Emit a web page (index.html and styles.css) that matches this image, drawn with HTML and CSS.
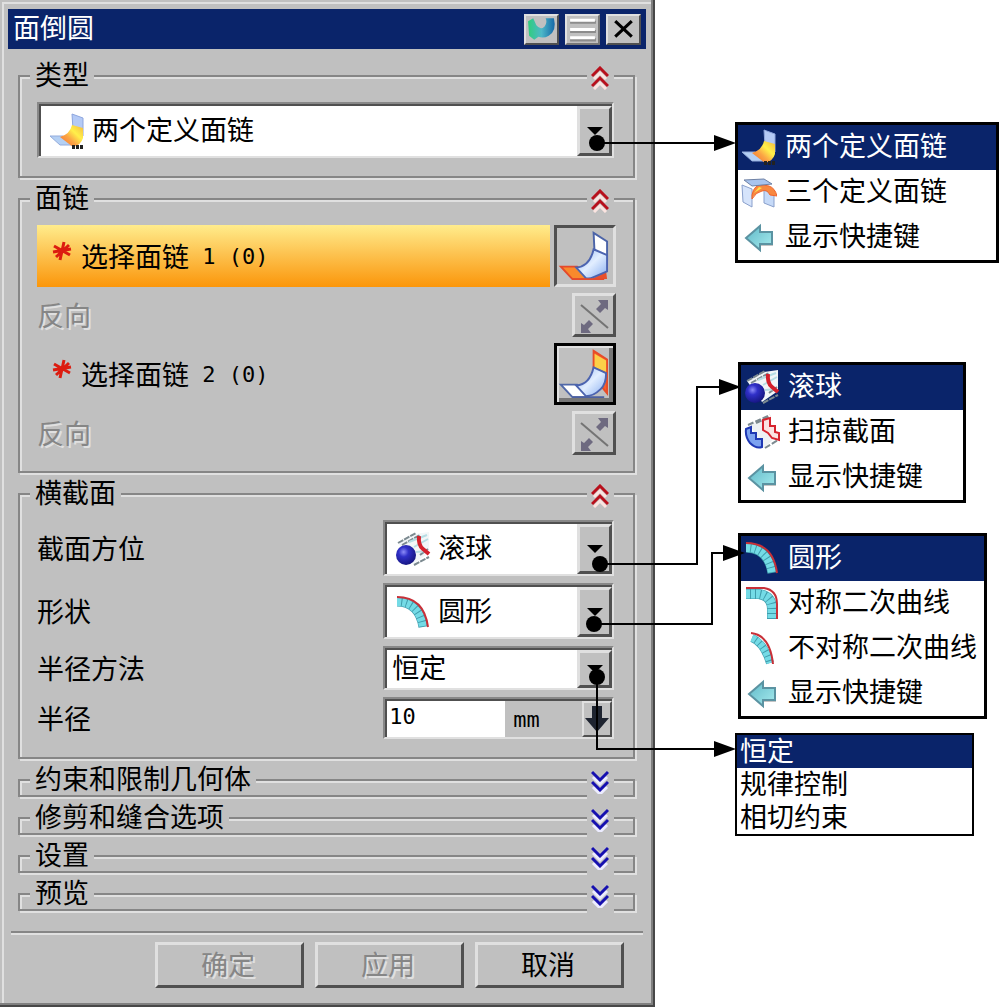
FILE: index.html
```html
<!DOCTYPE html>
<html lang="zh-CN">
<head>
  <meta charset="UTF-8">
  <meta name="viewport" content="width=device-width, initial-scale=1.0">
  <title>面倒圆</title>
  <link rel="stylesheet" href="styles.css">
</head>
<body>
  <!-- Shared icons -->
  <svg class="sprite" aria-hidden="true">
    <defs>
      <linearGradient id="blueFace" x1="0" y1="0" x2="1" y2="1">
        <stop offset="0" stop-color="#8fb4f4"/>
        <stop offset="0.5" stop-color="#e2eeff"/>
        <stop offset="1" stop-color="#88aef0"/>
      </linearGradient>
      <linearGradient id="warmFace" x1="0" y1="1" x2="1" y2="0">
        <stop offset="0" stop-color="#f4682a"/>
        <stop offset="0.4" stop-color="#fba545"/>
        <stop offset="0.65" stop-color="#fff04a"/>
        <stop offset="1" stop-color="#f4b840"/>
      </linearGradient>
      <linearGradient id="cyanArrow" x1="0" y1="0" x2="1" y2="1">
        <stop offset="0" stop-color="#5fb8c8"/>
        <stop offset="1" stop-color="#a8ecee"/>
      </linearGradient>
      <linearGradient id="swirl" x1="0" y1="0" x2="1" y2="0">
        <stop offset="0" stop-color="#2fce7c"/>
        <stop offset="0.5" stop-color="#4db8c8"/>
        <stop offset="1" stop-color="#1668a8"/>
      </linearGradient>
      <radialGradient id="ballFill" cx="0.38" cy="0.35" r="0.7">
        <stop offset="0" stop-color="#8c8cf8"/>
        <stop offset="0.35" stop-color="#3030c8"/>
        <stop offset="1" stop-color="#14147c"/>
      </radialGradient>
    </defs>
    <symbol id="two-faces" viewBox="0 0 36 36">
      <path d="M23 1l11 4v18l-10-6z" fill="#b4caf6" stroke="#8ea6de"/>
      <path d="M1 23h13l11 9H11z" fill="#b4d0f4" stroke="#94acdc"/>
      <path d="M23 12l11 3v10q-2 7-10 9l-13-10q10-3 12-12z" fill="url(#warmFace)"/>
      <path d="M23 34h12" stroke="#222" stroke-width="4" stroke-dasharray="3 1"/>
    </symbol>
    <symbol id="three-faces" viewBox="0 0 36 36">
      <path d="M1 11l10 4v18L2 28z" fill="#d6e4fb" stroke="#8aa0cc"/>
      <path d="M23 16l10 4v13l-10-4z" fill="#c6daf8" stroke="#8aa0cc"/>
      <path d="M11 21q2-11 11-10l6 1q6 2 8 10l-7-1q-3-6-8-4-6 1-10 8z" fill="#f88840" stroke="#f0642c"/>
      <path d="M3 6l20-1 8 5-20 2z" fill="#a8c4ee" stroke="#6e80a4"/>
      <path d="M13 19l5-6 3 1z" fill="#ffe14d"/>
    </symbol>
    <symbol id="shortcut" viewBox="0 0 36 36">
      <path d="M7 21L20 9v6h12v12H20v6z" fill="#c4c4c4"/>
      <path d="M5 19L19 7v6h12v12H19v6z" fill="url(#cyanArrow)" stroke="#5b93a2" stroke-width="2"/>
    </symbol>
    <symbol id="ball" viewBox="0 0 36 36">
      <path d="M3 12L20 3l14-2v21L18 33z" fill="#f2f6f8"/>
      <path d="M3 12L21 2M7 14L25 4M19 34l15-8M25 24l8-6" stroke="#7c8a90" stroke-width="2" stroke-dasharray="6 1"/>
      <path d="M14 11l18-7M19 16l14-8M21 21l12-1" stroke="#b6dde4" stroke-width="2"/>
      <path d="M24 5q-1 9 4 13l6 5" fill="none" stroke="#d4202c" stroke-width="4"/>
      <circle cx="11" cy="24" r="10" fill="url(#ballFill)"/>
    </symbol>
    <symbol id="swept" viewBox="0 0 36 36">
      <path d="M6 11L23 2l11 19-14 13z" fill="#eef2f4"/>
      <path d="M4 11L26 1M12 9l14-6M21 34l13-8" stroke="#7c8a90" stroke-width="2" stroke-dasharray="6 2"/>
      <path d="M19 6l7-2v8h5v6l4 1v7l-7-2-4-5-5-3z" fill="#fbe4e2" stroke="#d6242e" stroke-width="2"/>
      <path d="M2 15l5-2v6h5v6h6v8q-6 2-12-4-5-6-4-14z" fill="#7ca2f0" stroke="#1f38b4" stroke-width="2"/>
    </symbol>
    <symbol id="arc" viewBox="0 0 36 36">
      <path d="M2 8Q24 8 28 33" fill="none" stroke="#3f9cac" stroke-width="9"/>
      <path d="M2 8Q24 8 28 33" fill="none" stroke="#74dbe6" stroke-width="8" stroke-dasharray="4 1"/>
      <path d="M2 3Q29 3 33 33" fill="none" stroke="#c83038" stroke-width="2"/>
    </symbol>
    <symbol id="conic" viewBox="0 0 36 36">
      <path d="M2 9H15Q28 11 28 24V34" fill="none" stroke="#3f9cac" stroke-width="10"/>
      <path d="M2 9H15Q28 11 28 24V34" fill="none" stroke="#74dbe6" stroke-width="9" stroke-dasharray="4 1"/>
      <path d="M2 3H20Q33 5 33 19V34" fill="none" stroke="#c83038" stroke-width="2"/>
    </symbol>
    <symbol id="skew-conic" viewBox="0 0 36 36">
      <path d="M8 8Q20 13 26 33" fill="none" stroke="#3f9cac" stroke-width="8"/>
      <path d="M8 8Q20 13 26 33" fill="none" stroke="#74dbe6" stroke-width="7" stroke-dasharray="4 1"/>
      <path d="M7 3Q26 5 29 34" fill="none" stroke="#c83038" stroke-width="2"/>
    </symbol>
    <symbol id="fold-open" viewBox="0 0 18 24">
      <path d="M3 13l6-6 6 6M3 23l6-6 6 6" fill="none" stroke="#fbe4e0" stroke-width="3"/>
      <path d="M1 10l8-8 8 8M1 20l8-8 8 8" fill="none" stroke="#b8101c" stroke-width="3"/>
    </symbol>
    <symbol id="fold-closed" viewBox="0 0 18 24">
      <path d="M2 7l7 7 7-7M2 17l7 7 7-7" fill="none" stroke="#ececff" stroke-width="3"/>
      <path d="M1 2l8 8 8-8M1 12l8 8 8-8" fill="none" stroke="#1610b0" stroke-width="3"/>
    </symbol>
    <symbol id="star" viewBox="0 0 20 20">
      <path d="M12 1L8 19M2 5l16 9M4 16L17 4M1 11l18-3" stroke="#dc1c10" stroke-width="3"/>
    </symbol>
    <symbol id="flip" viewBox="0 0 36 36">
      <path d="M6 8l27 23" stroke="#747474" stroke-width="2"/>
      <path d="M33 3v10l-3-2-5 5-4-4 5-5-3-4zM6 36V26l3 2 5-5 4 4-5 5 3 4z" fill="#6e6a80"/>
    </symbol>
  </svg>

  <main class="page">
    <form class="dialog" aria-label="面倒圆">
      <header class="titlebar">
        <h1>面倒圆</h1>
        <button type="button" class="title-btn" aria-label="重置">
          <svg viewBox="0 0 30 26"><path d="M2 5l5-3 3 7q4 5 8 1 3-4 1-8l8 0q3 12-5 17-5 3-10 1l-4 3-5-4z" fill="url(#swirl)"/></svg>
        </button>
        <button type="button" class="title-btn title-btn-rolled" aria-label="折叠">
          <svg viewBox="0 0 30 26"><path d="M3 6h25M3 15h25M3 23h25" stroke="#8c8c8c" stroke-width="3"/><path d="M3 4h24M3 13h24M3 21h24" stroke="#fff" stroke-width="3"/></svg>
        </button>
        <button type="button" class="title-btn" aria-label="关闭">
          <svg viewBox="0 0 30 26"><path d="M7 5l16 15M23 5L7 20" stroke="#000" stroke-width="3"/></svg>
        </button>
      </header>

      <section class="group">
        <div class="group-head">
          <h2>类型</h2>
          <button type="button" class="fold" aria-label="折叠类型"><svg><use href="#fold-open"/></svg></button>
        </div>
        <div class="form">
          <div class="combo combo-tall">
            <svg class="icon"><use href="#two-faces"/></svg>
            <select aria-label="类型">
              <option>两个定义面链</option>
              <option>三个定义面链</option>
              <option>显示快捷键</option>
            </select>
            <span class="drop"></span>
          </div>
        </div>
      </section>

      <section class="group">
        <div class="group-head">
          <h2>面链</h2>
          <button type="button" class="fold" aria-label="折叠面链"><svg><use href="#fold-open"/></svg></button>
        </div>
        <div class="picks">
          <div class="pick">
            <label class="pick-label active" for="chain1">
              <svg class="star"><use href="#star"/></svg>选择面链<span class="latin"> 1 (0)</span>
            </label>
            <button type="button" id="chain1" class="chain-btn pressed">
              <svg viewBox="0 0 54 54">
                <path d="M51 43L36 51h16" fill="#e8502c"/>
                <path d="M4 38h17l12 13H16z" fill="#f98a2c" stroke="#e44a2c" stroke-width="2"/>
                <path d="M24 38l9 10-5 1-8-9z" fill="#fbc878"/>
                <path d="M38 3l14 9v18l-13-7z" fill="#fff" stroke="#4c64a8" stroke-width="2"/>
                <path d="M38 20l14 6v17L38 49q-4 2-8 1L20 39q14-1 18-19z" fill="url(#blueFace)" stroke="#4c64b0" stroke-width="2"/>
                <path d="M16 51h33" stroke="#e44a2c" stroke-width="2"/>
              </svg>
            </button>
          </div>
          <div class="pick">
            <label class="off" for="flip1">反向</label>
            <button type="button" id="flip1" class="flip-btn" disabled><svg><use href="#flip"/></svg></button>
          </div>
          <div class="pick">
            <label class="pick-label" for="chain2">
              <svg class="star"><use href="#star"/></svg>选择面链<span class="latin"> 2 (0)</span>
            </label>
            <button type="button" id="chain2" class="chain-btn">
              <svg viewBox="0 0 54 54">
                <path d="M4 38h17l12 13H16z" fill="#fff" stroke="#5068a8" stroke-width="2"/>
                <path d="M38 3l14 9v35l-5-6-9-18z" fill="#f4602c" stroke="#e84c28" stroke-width="2"/>
                <path d="M39 6l12 7v12l-12-5z" fill="#fcd048"/>
                <path d="M38 20l13 6q0 12-6 17-7 7-15 7L20 39q14-1 18-19z" fill="url(#blueFace)" stroke="#4c64b0" stroke-width="2"/>
                <path d="M16 51h33" stroke="#4c60a0" stroke-width="2"/>
              </svg>
            </button>
          </div>
          <div class="pick">
            <label class="off" for="flip2">反向</label>
            <button type="button" id="flip2" class="flip-btn" disabled><svg><use href="#flip"/></svg></button>
          </div>
        </div>
      </section>

      <section class="group">
        <div class="group-head">
          <h2>横截面</h2>
          <button type="button" class="fold" aria-label="折叠横截面"><svg><use href="#fold-open"/></svg></button>
        </div>
        <div class="form">
          <div class="field">
            <label for="orient">截面方位</label>
            <div class="combo combo-tall">
              <svg class="icon"><use href="#ball"/></svg>
              <select id="orient">
                <option>滚球</option>
                <option>扫掠截面</option>
                <option>显示快捷键</option>
              </select>
              <span class="drop"></span>
            </div>
          </div>
          <div class="field">
            <label for="shape">形状</label>
            <div class="combo combo-tall">
              <svg class="icon"><use href="#arc"/></svg>
              <select id="shape">
                <option>圆形</option>
                <option>对称二次曲线</option>
                <option>不对称二次曲线</option>
                <option>显示快捷键</option>
              </select>
              <span class="drop"></span>
            </div>
          </div>
          <div class="field">
            <label for="method">半径方法</label>
            <div class="combo">
              <select id="method" class="plain">
                <option>恒定</option>
                <option>规律控制</option>
                <option>相切约束</option>
              </select>
              <span class="drop"></span>
            </div>
          </div>
          <div class="field">
            <label for="radius">半径</label>
            <div class="combo combo-number">
              <input type="text" id="radius" value="10">
              <span class="unit">mm</span>
              <button type="button" class="more" aria-label="半径选项">
                <svg viewBox="0 0 26 34"><path d="M8 3h10v12h7L13 29 1 15h7z" fill="#1e2430"/></svg>
              </button>
            </div>
          </div>
        </div>
      </section>

      <section class="group">
        <div class="group-head">
          <h2>约束和限制几何体</h2>
          <button type="button" class="fold" aria-label="展开约束和限制几何体"><svg><use href="#fold-closed"/></svg></button>
        </div>
      </section>
      <section class="group">
        <div class="group-head">
          <h2>修剪和缝合选项</h2>
          <button type="button" class="fold" aria-label="展开修剪和缝合选项"><svg><use href="#fold-closed"/></svg></button>
        </div>
      </section>
      <section class="group">
        <div class="group-head">
          <h2>设置</h2>
          <button type="button" class="fold" aria-label="展开设置"><svg><use href="#fold-closed"/></svg></button>
        </div>
      </section>
      <section class="group">
        <div class="group-head">
          <h2>预览</h2>
          <button type="button" class="fold" aria-label="展开预览"><svg><use href="#fold-closed"/></svg></button>
        </div>
      </section>

      <footer class="actions">
        <button type="submit" disabled>确定</button>
        <button type="button" disabled>应用</button>
        <button type="button">取消</button>
      </footer>
    </form>

    <aside class="callouts">
      <div class="menu menu-type" role="menu" aria-label="类型">
        <button type="button" role="menuitem" class="current"><svg class="icon"><use href="#two-faces"/></svg>两个定义面链</button>
        <button type="button" role="menuitem"><svg class="icon"><use href="#three-faces"/></svg>三个定义面链</button>
        <button type="button" role="menuitem"><svg class="icon"><use href="#shortcut"/></svg>显示快捷键</button>
      </div>
      <div class="menu menu-orient" role="menu" aria-label="截面方位">
        <button type="button" role="menuitem" class="current"><svg class="icon"><use href="#ball"/></svg>滚球</button>
        <button type="button" role="menuitem"><svg class="icon"><use href="#swept"/></svg>扫掠截面</button>
        <button type="button" role="menuitem"><svg class="icon"><use href="#shortcut"/></svg>显示快捷键</button>
      </div>
      <div class="menu menu-shape" role="menu" aria-label="形状">
        <button type="button" role="menuitem" class="current"><svg class="icon"><use href="#arc"/></svg>圆形</button>
        <button type="button" role="menuitem"><svg class="icon"><use href="#conic"/></svg>对称二次曲线</button>
        <button type="button" role="menuitem"><svg class="icon"><use href="#skew-conic"/></svg>不对称二次曲线</button>
        <button type="button" role="menuitem"><svg class="icon"><use href="#shortcut"/></svg>显示快捷键</button>
      </div>
      <div class="menu menu-method" role="menu" aria-label="半径方法">
        <button type="button" role="menuitem" class="current">恒定</button>
        <button type="button" role="menuitem">规律控制</button>
        <button type="button" role="menuitem">相切约束</button>
      </div>

      <!-- Leader lines from each drop-down to its menu -->
      <svg class="leaders" viewBox="580 0 170 860" aria-hidden="true">
        <g fill="none" stroke="#000" stroke-width="2">
          <path d="M597 143H716"/>
          <path d="M600 564H697V387H720"/>
          <path d="M594 624H712V553H726"/>
          <path d="M597 677V749H716"/>
        </g>
        <circle cx="597" cy="143" r="8"/>
        <circle cx="600" cy="564" r="8"/>
        <circle cx="594" cy="624" r="8"/>
        <circle cx="597" cy="677" r="8"/>
        <path d="M714 135l22 8-22 8zM719 379l22 8-22 8zM723 545l22 8-22 8zM714 741l22 8-22 8z"/>
      </svg>
    </aside>
  </main>
</body>
</html>
```

FILE: styles.css
```css
:root {
  --face: #c0c0c0;
  --light: #e0e0e0;
  --shade: #868686;
  --dark: #505050;
  --navy: #0a246a;
}
* {
  box-sizing: border-box;
}
body {
  margin: 0;
  background: #fff;
  color: #000;
  font-family: "Noto Sans CJK SC", sans-serif;
  font-size: 27px;
  line-height: 30px;
}
button, select, input {
  font: inherit;
  color: inherit;
  margin: 0;
  padding: 0;
  border: none;
  border-radius: 0;
}
h1, h2 {
  margin: 0;
  font-size: 27px;
  font-weight: 400;
}
svg {
  display: block;
  flex: none;
}
.sprite {
  position: absolute;
  width: 0;
  height: 0;
}
.page {
  display: flex;
  align-items: flex-start;
}

/* Dialog */
.dialog {
  flex: 1;
  min-width: 0;
  padding: 9px 9px 19px 8px;
  background: var(--face);
  box-shadow: inset -2px -2px #484848, inset -4px -4px #808080,
    inset 2px 2px var(--face), inset 4px 4px var(--light);
}
.titlebar {
  display: flex;
  align-items: center;
  gap: 6px;
  height: 40px;
  padding: 0 5px;
  background: var(--navy);
  color: #fff;
}
.titlebar h1 {
  flex: 1;
  padding-bottom: 4px;
}
.title-btn {
  width: 35px;
  height: 31px;
  background: var(--face);
  border: 2px solid;
  border-color: var(--light) var(--dark) var(--dark) var(--light);
}
.title-btn svg {
  width: 100%;
  height: 100%;
}
.title-btn-rolled {
  border-color: var(--light) #777 #777 var(--light);
}

/* Etched group boxes */
.group {
  margin: 20px 11px 0 10px;
  border: 2px solid var(--shade);
  box-shadow: 2px 2px var(--light), inset 2px 2px var(--light);
}
.titlebar + .group {
  margin-top: 26px;
}
.group-head {
  display: flex;
  justify-content: space-between;
  align-items: flex-start;
  height: 30px;
  margin-top: -16px;
  padding: 0 19px 0 10px;
}
.group-head h2 {
  padding: 0 5px;
  line-height: 26px;
  background: var(--face);
}
.fold {
  width: 27px;
  height: 38px;
  padding: 0 5px 4px 4px;
  background: var(--face);
}
.fold svg {
  width: 18px;
  height: 24px;
}
.form {
  display: grid;
  gap: 7px;
  padding: 11px 19px 18px 17px;
}
.field {
  display: grid;
  grid-template-columns: minmax(0, 1fr) 40%;
  align-items: center;
}

/* Sunken boxes */
.combo {
  display: flex;
  height: 44px;
  padding: 2px 0 0 2px;
  background: #fff;
  border: 2px solid;
  border-color: #888 var(--light) var(--light) #888;
  box-shadow: inset 2px 2px var(--dark);
}
.combo-tall {
  height: 56px;
}
.combo .icon {
  align-self: center;
  margin: 0 7px 0 8px;
}
.combo select {
  flex: 1;
  min-width: 0;
  padding-bottom: 4px;
  background: none;
  appearance: none;
}
.combo .plain {
  padding-left: 5px;
}
.icon {
  width: 36px;
  height: 36px;
}
.drop {
  display: flex;
  align-items: center;
  justify-content: center;
  width: 35px;
  background: var(--face);
  border: 3px solid;
  border-color: var(--light) var(--dark) var(--dark) var(--light);
  pointer-events: none;
}
.drop::before {
  content: "";
  border: 8px solid transparent;
  border-top-color: #000;
  border-bottom: none;
}
.combo-number {
  height: 42px;
  background: var(--face);
}
.combo-number input {
  width: 118px;
  padding: 0 2px 4px;
  background: #fff;
  font-family: "DejaVu Sans Mono", monospace;
  font-size: 22px;
}
.unit {
  flex: 1;
  padding: 4px 0 0 8px;
  font-family: "DejaVu Sans Mono", monospace;
  font-size: 22px;
}
.more {
  width: 30px;
  background: var(--face);
  border: 2px solid;
  border-color: var(--light) var(--dark) var(--dark) var(--light);
}
.more svg {
  width: 26px;
  height: 34px;
}

/* Face chain rows */
.picks {
  display: grid;
  gap: 6px;
  padding: 11px 17px 16px 17px;
}
.pick {
  display: flex;
  align-items: center;
  justify-content: space-between;
  gap: 4px;
}
.pick-label {
  flex: 1;
  display: flex;
  align-items: center;
  height: 62px;
  padding-left: 15px;
}
.active {
  background: linear-gradient(#ffec8c, #fdc452 45%, #fb960a);
}
.star {
  width: 20px;
  height: 20px;
  margin: 0 9px 10px 0;
}
.latin {
  padding-top: 2px;
  font-family: "DejaVu Sans Mono", monospace;
  font-size: 22px;
  white-space: pre;
}
.off {
  color: var(--shade);
  text-shadow: 2px 2px var(--light);
}
.chain-btn {
  width: 62px;
  height: 62px;
  background: var(--face);
  border: 3px solid #000;
  box-shadow: inset 2px 2px var(--light), inset -4px -4px #777;
}
.chain-btn.pressed {
  border-color: var(--dark) var(--light) var(--light) var(--dark);
  box-shadow: none;
}
.chain-btn svg {
  width: 52px;
  height: 52px;
}
.flip-btn {
  width: 44px;
  height: 44px;
  background: var(--face);
  border: 3px solid;
  border-color: var(--light) var(--dark) var(--dark) var(--light);
}
.flip-btn svg {
  width: 36px;
  height: 36px;
}

/* Bottom buttons */
.actions {
  display: flex;
  justify-content: flex-end;
  gap: 11px;
  margin: 20px 3px 0;
  padding: 9px 19px 0 0;
  border-top: 2px solid var(--shade);
  box-shadow: inset 0 2px var(--light);
}
.actions button {
  width: 149px;
  height: 46px;
  padding: 0 3px 2px 0;
  background: var(--face);
  border: 3px solid;
  border-color: var(--light) var(--dark) var(--dark) var(--light);
}
.actions button:disabled {
  color: var(--shade);
  text-shadow: 2px 2px var(--light);
}

/* Opened menus */
.callouts {
  position: relative;
  flex: none;
  padding: 122px 0 20px 80px;
}
.menu {
  display: flex;
  flex-direction: column;
  background: #fff;
  border: 3px solid #000;
}
.menu button {
  display: flex;
  align-items: center;
  gap: 8px;
  height: 45px;
  padding: 0 5px 6px 3px;
  background: none;
  text-align: left;
}
.menu .icon {
  margin-top: 4px;
}
.menu .current {
  background: var(--navy);
  color: #fff;
}
.menu-type {
  width: 264px;
}
.menu-orient {
  width: 228px;
  margin: 99px 0 0 3px;
}
.menu-shape {
  width: 249px;
  margin: 30px 0 0 3px;
}
.menu-method {
  width: 239px;
  margin-top: 14px;
  border-width: 2px;
}
.menu-method button {
  height: 33px;
  padding-bottom: 3px;
}
.leaders {
  position: absolute;
  top: 0;
  left: -75px;
  width: 170px;
  height: 860px;
  pointer-events: none;
}
```
